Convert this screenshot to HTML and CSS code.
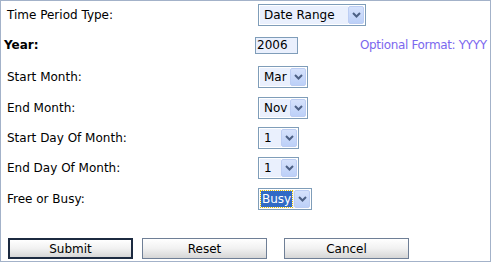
FILE: index.html
```html
<!DOCTYPE html>
<html>
<head>
<meta charset="utf-8">
<link rel="stylesheet" href="styles.css">
</head>
<body>
<div class="frame">
  <form class="form">
    <div class="row h28">
      <span class="label">Time Period Type:</span>
      <span class="ctl">
        <span class="select w-range"><span class="value">Date Range</span><span class="btn"><svg width="9" height="6" viewBox="0 0 9 6"><polyline points="1,1 4.5,4.5 8,1" fill="none" stroke="#4d6185" stroke-width="2"/></svg></span></span>
      </span>
    </div>
    <div class="row h32">
      <span class="label label-bold">Year:</span>
      <span class="ctl ctl-year">
        <span class="input">2006</span>
        <span class="hint">Optional Format: YYYY</span>
      </span>
    </div>
    <div class="row h32">
      <span class="label">Start Month:</span>
      <span class="ctl">
        <span class="select w-month"><span class="value">Mar</span><span class="btn"><svg width="9" height="6" viewBox="0 0 9 6"><polyline points="1,1 4.5,4.5 8,1" fill="none" stroke="#4d6185" stroke-width="2"/></svg></span></span>
      </span>
    </div>
    <div class="row h29">
      <span class="label">End Month:</span>
      <span class="ctl">
        <span class="select w-month"><span class="value">Nov</span><span class="btn"><svg width="9" height="6" viewBox="0 0 9 6"><polyline points="1,1 4.5,4.5 8,1" fill="none" stroke="#4d6185" stroke-width="2"/></svg></span></span>
      </span>
    </div>
    <div class="row h31">
      <span class="label">Start Day Of Month:</span>
      <span class="ctl">
        <span class="select w-day"><span class="value">1</span><span class="btn"><svg width="9" height="6" viewBox="0 0 9 6"><polyline points="1,1 4.5,4.5 8,1" fill="none" stroke="#4d6185" stroke-width="2"/></svg></span></span>
      </span>
    </div>
    <div class="row h29">
      <span class="label">End Day Of Month:</span>
      <span class="ctl">
        <span class="select w-day"><span class="value">1</span><span class="btn"><svg width="9" height="6" viewBox="0 0 9 6"><polyline points="1,1 4.5,4.5 8,1" fill="none" stroke="#4d6185" stroke-width="2"/></svg></span></span>
      </span>
    </div>
    <div class="row h33">
      <span class="label">Free or Busy:</span>
      <span class="ctl">
        <span class="select w-busy"><span class="value"><span class="selected">Busy</span></span><span class="btn"><svg width="9" height="6" viewBox="0 0 9 6"><polyline points="1,1 4.5,4.5 8,1" fill="none" stroke="#4d6185" stroke-width="2"/></svg></span></span>
      </span>
    </div>
    <div class="buttons">
      <button type="button" class="button button-default">Submit</button>
      <button type="button" class="button">Reset</button>
      <button type="button" class="button button-cancel">Cancel</button>
    </div>
  </form>
</div>
</body>
</html>
```
FILE: styles.css
```css
html, body {
  margin: 0;
  padding: 0;
  background: #ffffff;
}
.frame {
  box-sizing: border-box;
  width: 491px;
  height: 262px;
  border: 1px solid #a3b2c9;
  overflow: hidden;
  font-family: "DejaVu Sans", Verdana, sans-serif;
  font-size: 12px;
  color: #000;
}
.form {
  display: flex;
  flex-direction: column;
}
.row {
  display: grid;
  grid-template-columns: 257px 1fr;
  align-items: center;
}
.h28 { height: 28px; }
.h29 { height: 29px; }
.h31 { height: 31px; }
.h32 { height: 32px; }
.h33 { height: 33px; }
.label {
  padding-left: 6px;
  white-space: nowrap;
}
.label-bold {
  padding-left: 3px;
  font-weight: bold;
}
.ctl {
  display: flex;
  align-items: center;
  white-space: nowrap;
}
.ctl-year {
  margin-left: -3px;
}
.select {
  box-sizing: border-box;
  display: inline-flex;
  align-items: stretch;
  height: 22px;
  border: 1px solid #7f9db9;
  padding: 1px;
  background: #fff;
}
.select .value {
  flex: 1;
  display: flex;
  align-items: center;
  padding-left: 4px;
  background: #eaf0fd;
}
.select .btn {
  box-sizing: border-box;
  width: 16px;
  display: flex;
  align-items: center;
  justify-content: center;
  border: 1px solid #bccdf3;
  border-radius: 2px;
  background: linear-gradient(#d6e2fc, #bcd0f8);
}
.w-range { width: 108px; }
.w-month { width: 50px; }
.w-day { width: 41px; }
.w-busy { width: 54px; }
.w-busy .value { padding-left: 1px; }
.selected {
  background: #316ac5;
  color: #fff;
  outline: 1px dotted #e8c000;
  padding: 1px 1px;
}
.input {
  box-sizing: border-box;
  width: 43px;
  height: 17px;
  border: 1px solid #7f9db9;
  background: #eaf0fd;
  padding-left: 1px;
  line-height: 15px;
}
.hint {
  margin-left: 62px;
  color: #7b68ee;
  letter-spacing: -0.35px;
}
.buttons {
  display: flex;
  margin-top: 23px;
  padding-left: 7px;
}
.button {
  box-sizing: border-box;
  width: 125px;
  height: 21px;
  margin: 0 9px 0 0;
  padding: 0;
  border: 1px solid #6f7f96;
  background: linear-gradient(#ffffff, #f1f1f1 50%, #d6d6d6);
  font-family: "DejaVu Sans", Verdana, sans-serif;
  font-size: 12px;
  color: #000;
}
.button-default {
  border: 2px solid #1c2a40;
}
.button-cancel {
  margin-left: 8px;
}
```
